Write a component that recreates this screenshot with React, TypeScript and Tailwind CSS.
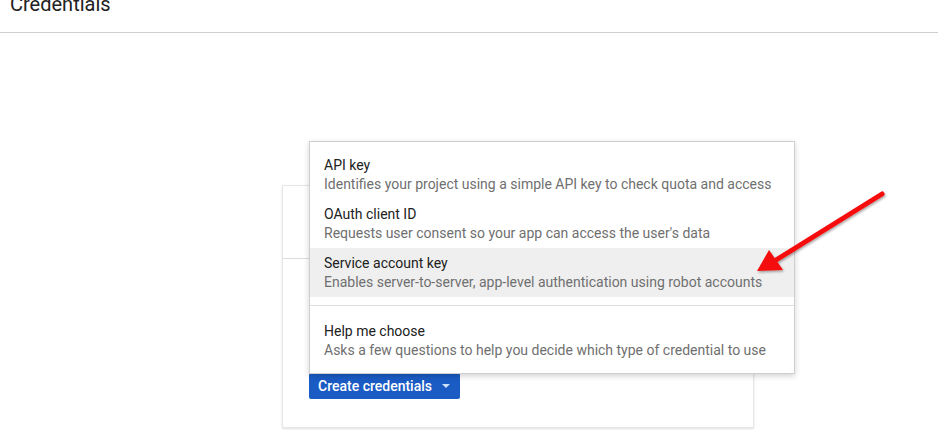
import React from "react";

const items = [
  { t: "API key", d: "Identifies your project using a simple API key to check quota and access" },
  { t: "OAuth client ID", d: "Requests user consent so your app can access the user's data" },
  { t: "Service account key", d: "Enables server-to-server, app-level authentication using robot accounts", active: true },
];

function Item({ t, d, active }: { t: string; d: string; active?: boolean }) {
  return (
    <div className={`pl-[14px] pt-[6px] pb-[5px] ${active ? "bg-[#efefef]" : ""}`}>
      <div className="text-[14px] leading-[19px] text-[#212121]">{t}</div>
      <div className="text-[14px] leading-[19px] text-[#6f6f6f]">{d}</div>
    </div>
  );
}

export default function App() {
  return (
    <div
      className="relative flex flex-col w-[938px] h-[441px] overflow-hidden bg-white"
      style={{ fontFamily: "Roboto, 'Liberation Sans', sans-serif" }}
    >
      <div className="flex flex-col h-[33px] shrink-0 border-b border-[#cfcfcf]">
        <div className="pl-[10px] mt-[-10px] text-[20px] leading-[28px] text-[#212121]">Credentials</div>
      </div>

      <div className="ml-[282px] mt-[152px] w-[472px] h-[243px] shrink-0 border border-[#e6e6e6] shadow-[0_1px_2px_rgba(0,0,0,0.12)] bg-white">
        <div className="h-[73px] border-b border-[#dcdcdc]" />
        <div className="pl-[26px] mt-[114px]">
          <button className="flex items-center h-[26px] w-[151px] pl-[9px] bg-[#1a5bc4] rounded-[2px] text-white text-[14px] font-medium">
            Create credentials
            <svg width="8" height="4" viewBox="0 0 8 4" className="ml-[10px]">
              <path d="M0 0 L8 0 L4 4 Z" fill="#cfe0fb" />
            </svg>
          </button>
        </div>
      </div>

      <div className="absolute left-[309px] top-[141px] w-[486px] h-[233px] bg-white border border-[#cfcfcf] shadow-[0_2px_6px_rgba(0,0,0,0.18)] pt-[8px]">
        {items.map((i) => (
          <Item key={i.t} {...i} />
        ))}
        <div className="mt-[8px] h-px bg-[#dedede]" />
        <div className="mt-[10px]">
          <Item t="Help me choose" d="Asks a few questions to help you decide which type of credential to use" />
        </div>
      </div>

      <svg className="absolute left-0 top-0" width="938" height="441" viewBox="0 0 938 441">
        <defs>
          <filter id="sh" x="-20%" y="-20%" width="140%" height="140%">
            <feDropShadow dx="1" dy="1.5" stdDeviation="1.2" floodColor="#000" floodOpacity="0.35" />
          </filter>
        </defs>
        <g filter="url(#sh)">
          <line x1="882" y1="194" x2="776" y2="260" stroke="#f50d0d" strokeWidth="5" strokeLinecap="round" />
          <path d="M757 271 L769 250 L783 270 Z" fill="#f50d0d" />
        </g>
      </svg>
    </div>
  );
}
